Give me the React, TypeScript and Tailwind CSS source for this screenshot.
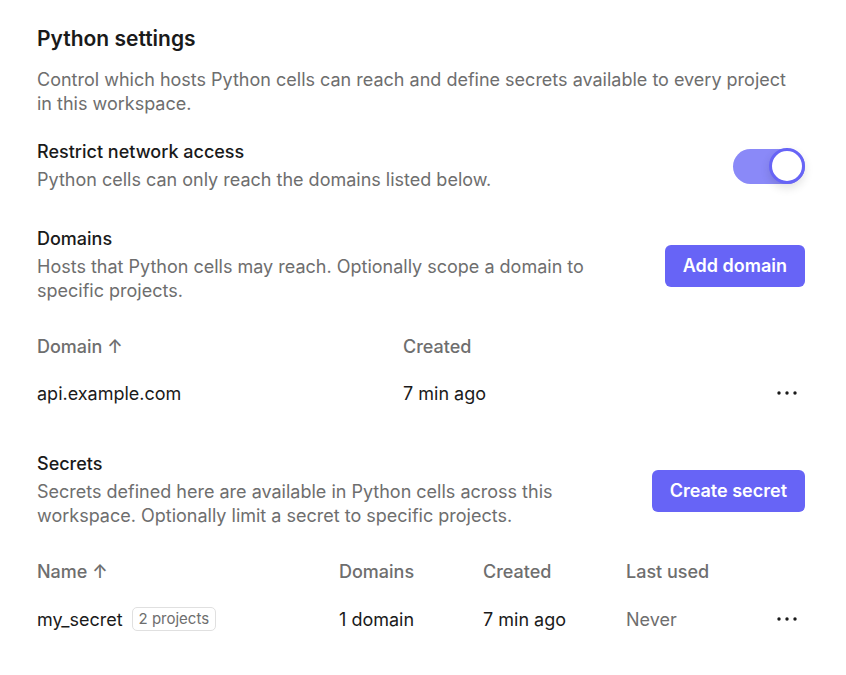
import React from "react";

function MoreButton() {
  return (
    <button className="flex h-[36px] w-[36px] items-center justify-center rounded-md">
      <svg width="20" height="4" viewBox="0 0 20 4" fill="#1a1a1a">
        <circle cx="2" cy="2" r="1.7" />
        <circle cx="10" cy="2" r="1.7" />
        <circle cx="18" cy="2" r="1.7" />
      </svg>
    </button>
  );
}

function Toggle() {
  return (
    <div className="relative h-[35px] w-[72px] rounded-full bg-[#8a89f8]">
      <div className="absolute right-0 top-[-0.5px] h-[36px] w-[36px] rounded-full border-[3px] border-[#6764f6] bg-white shadow-[0_4px_10px_rgba(0,0,0,0.12)]" />
    </div>
  );
}

function PrimaryButton({ children }: { children: React.ReactNode }) {
  return (
    <button className="mt-[2px] h-[42px] rounded-[6px] bg-[#6764f6] px-[18px] text-[18px] font-semibold leading-[42px] text-white">
      {children}
    </button>
  );
}

export default function App() {
  return (
    <div
      className="min-h-[675px] w-[846px] bg-white pl-[37px] pr-[41px] pt-[25px] text-[#1a1a1a]"
      style={{ fontFamily: "Inter, 'Noto Sans', sans-serif" }}
    >
      <h1 className="text-[21px] font-semibold leading-[28px]">Python settings</h1>
      <p className="mt-[15px] text-[18px] leading-[24px] text-[#6e6e6e]">
        Control which hosts Python cells can reach and define secrets available to every project
        in this workspace.
      </p>

      {/* network restriction */}
      <div className="mt-[24px] flex items-center justify-between">
        <div>
          <div className="text-[18px] font-medium leading-[24px]">Restrict network access</div>
          <div className="mt-[4px] text-[18px] leading-[24px] text-[#6e6e6e]">
            Python cells can only reach the domains listed below.
          </div>
        </div>
        <Toggle />
      </div>

      {/* domains */}
      <div className="mt-[35px] flex items-center justify-between">
        <div className="w-[600px]">
          <div className="text-[18px] font-medium leading-[24px]">Domains</div>
          <div className="mt-[4px] text-[18px] leading-[24px] text-[#6e6e6e]">
            Hosts that Python cells may reach. Optionally scope a domain to specific projects.
          </div>
        </div>
        <PrimaryButton>Add domain</PrimaryButton>
      </div>

      <div className="mt-[19px] text-[18px]">
        <div className="grid h-[48px] grid-cols-[366px_1fr_36px] items-center font-medium text-[#6e6e6e]">
          <div>Domain ↑</div>
          <div>Created</div>
          <div />
        </div>
        <div className="grid h-[46px] grid-cols-[366px_1fr_36px] items-center">
          <div>api.example.com</div>
          <div>7 min ago</div>
          <MoreButton />
        </div>
      </div>

      {/* secrets */}
      <div className="mt-[36px] flex items-center justify-between">
        <div className="w-[580px]">
          <div className="text-[18px] font-medium leading-[24px]">Secrets</div>
          <div className="mt-[4px] text-[18px] leading-[24px] text-[#6e6e6e]">
            Secrets defined here are available in Python cells across this workspace. Optionally
            limit a secret to specific projects.
          </div>
        </div>
        <PrimaryButton>Create secret</PrimaryButton>
      </div>

      <div className="mt-[19px] text-[18px]">
        <div className="grid h-[48px] grid-cols-[302px_144px_143px_1fr_36px] items-center font-medium text-[#6e6e6e]">
          <div>Name ↑</div>
          <div>Domains</div>
          <div>Created</div>
          <div>Last used</div>
          <div />
        </div>
        <div className="grid h-[48px] grid-cols-[302px_144px_143px_1fr_36px] items-center">
          <div className="flex items-center gap-[9px]">
            <span>my_secret</span>
            <span className="rounded-[5px] border border-[#e0e0e0] px-[6px] text-[15px] leading-[22px] text-[#6e6e6e]">
              2 projects
            </span>
          </div>
          <div>1 domain</div>
          <div>7 min ago</div>
          <div className="text-[#6e6e6e]">Never</div>
          <MoreButton />
        </div>
      </div>
    </div>
  );
}
